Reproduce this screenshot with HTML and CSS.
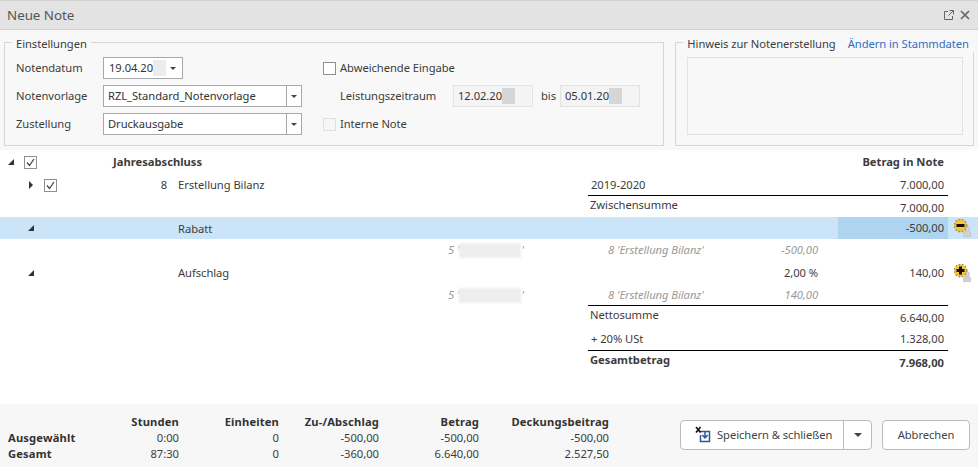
FILE: index.html
```html
<!doctype html>
<html>
<head>
<meta charset="utf-8">
<title>Neue Note</title>
<link rel="stylesheet" href="styles.css">
</head>

<body>
<svg class="defs" width="0" height="0">
	<defs>
		<symbol id="open" viewBox="0 0 6 6"><path d="M6 0V6H0Z"/></symbol>
		<symbol id="closed" viewBox="0 0 6 8"><path d="M1 0L5 4L1 8Z"/></symbol>
		<symbol id="gear" viewBox="0 0 18 18">
			<path d="M9.500 17.500v-2.500c0-2 1.500-3 3.500-3s3.500 1 3.500 3v2.500z" fill="#d2d2d2" stroke="#bdbdbd" stroke-width=".7"/>
			<circle cx="13" cy="10" r="2.500" fill="#d8d8d8" stroke="#bdbdbd" stroke-width=".7"/>
			<circle cx="6.500" cy="6.500" r="6.200" fill="none" stroke="#a58a3a" stroke-width="1.400" stroke-dasharray="1.800 1.500"/>
			<circle cx="6.500" cy="6.500" r="5.500" fill="#f8c82c" stroke="#d9a520" stroke-width=".6"/>
		</symbol>
	</defs>
</svg>

<div class="title">
	<span class="title-text">Neue Note</span>
	<svg class="win-ico" width="10" height="10" viewBox="0 0 10 10"><path d="M4 1.500H.5V9.500H8.500V6M5.500 .5H9.500V4.500M9.500 .5L4.500 5.500" fill="none" stroke="#666" stroke-width="1"/></svg>
	<svg class="win-ico" width="10" height="10" viewBox="0 0 10 10"><path d="M1 1L9 9M9 1L1 9" fill="none" stroke="#666" stroke-width="1.700"/></svg>
</div>

<div class="top">
	<fieldset class="box settings">
		<legend>Einstellungen</legend>
		<div class="form">
			<label>Notendatum</label>
			<div class="date-cell">
				<div class="combo date">19.04.20<span class="blur"></span><i class="caret"></i></div>
			</div>
			<div class="check-line"><span class="check"></span>Abweichende Eingabe</div>

			<label>Notenvorlage</label>
			<div class="combo">RZL_Standard_Notenvorlage<b class="drop"><i class="caret"></i></b></div>
			<div class="period">
				<span class="period-label">Leistungszeitraum</span>
				<span class="ro">12.02.20<span class="blur dark"></span></span>
				<span class="bis">bis</span>
				<span class="ro">05.01.20<span class="blur dark"></span></span>
			</div>

			<label>Zustellung</label>
			<div class="combo">Druckausgabe<b class="drop"><i class="caret"></i></b></div>
			<div class="check-line"><span class="check off"></span>Interne Note</div>
		</div>
	</fieldset>

	<fieldset class="box hint">
		<legend><span>Hinweis zur Notenerstellung</span><a href="#">Ändern in Stammdaten</a></legend>
		<div class="hint-text"></div>
	</fieldset>
</div>

<div class="tree">
	<div class="row head">
		<div class="tc lv0"><svg class="arrow"><use href="#open"/></svg><span class="check on"><svg width="11" height="11" viewBox="0 0 11 11"><path d="M2 5.500L4.500 8.500L9 2" fill="none" stroke="#444" stroke-width="1.300"/></svg></span></div>
		<div class="wide b">Jahresabschluss</div>
		<div class="amt b">Betrag in Note</div>
	</div>
	<div class="row h22">
		<div class="tc lv1"><svg class="arrow small"><use href="#closed"/></svg><span class="check on"><svg width="11" height="11" viewBox="0 0 11 11"><path d="M2 5.500L4.500 8.500L9 2" fill="none" stroke="#444" stroke-width="1.300"/></svg></span></div>
		<div class="num">8</div>
		<div></div>
		<div class="name">Erstellung Bilanz</div>
		<div></div>
		<div class="desc">2019-2020</div>
		<div class="amt">7.000,00</div>
	</div>
	<div class="rule"></div>
	<div class="row h21">
		<div class="lead"></div>
		<div class="desc lift">Zwischensumme</div>
		<div class="amt drop2">7.000,00</div>
	</div>
	<div class="row h22 sel">
		<div class="tc lv1"><svg class="arrow"><use href="#open"/></svg></div>
		<div></div>
		<div></div>
		<div class="name">Rabatt</div>
		<div></div>
		<div class="desc"></div>
		<div class="amt cur">-500,00</div>
		<svg class="act" width="18" height="18"><use href="#gear"/><path d="M2.500 5H10.500V8H2.500Z" fill="#111"/></svg>
	</div>
	<div class="row h22 sub">
		<div class="lead2"></div>
		<div class="ref">5 '<span class="blur wide-blur"></span>'</div>
		<div class="desc split"><span>8 'Erstellung Bilanz'</span><span>-500,00</span></div>
	</div>
	<div class="row h23">
		<div class="tc lv1"><svg class="arrow"><use href="#open"/></svg></div>
		<div></div>
		<div></div>
		<div class="name">Aufschlag</div>
		<div></div>
		<div class="desc pct">2,00 %</div>
		<div class="amt">140,00</div>
		<svg class="act" width="18" height="18"><use href="#gear"/><path d="M2.500 5H5V2.500H8V5H10.500V8H8V10.500H5V8H2.500Z" fill="#111"/></svg>
	</div>
	<div class="row h22 sub">
		<div class="lead2"></div>
		<div class="ref">5 '<span class="blur wide-blur"></span>'</div>
		<div class="desc split"><span>8 'Erstellung Bilanz'</span><span>140,00</span></div>
	</div>
	<div class="rule"></div>
	<div class="row h21">
		<div class="lead"></div>
		<div class="desc lift">Nettosumme</div>
		<div class="amt drop2">6.640,00</div>
	</div>
	<div class="row h24">
		<div class="lead"></div>
		<div class="desc">+ 20% USt</div>
		<div class="amt">1.328,00</div>
	</div>
	<div class="rule"></div>
	<div class="row h21">
		<div class="lead"></div>
		<div class="desc lift b">Gesamtbetrag</div>
		<div class="amt drop2 b">7.968,00</div>
	</div>
</div>

<div class="foot">
	<div class="stats">
		<span></span><b>Stunden</b><b>Einheiten</b><b>Zu-/Abschlag</b><b>Betrag</b><b>Deckungsbeitrag</b>
		<b>Ausgewählt</b><span>0:00</span><span>0</span><span>-500,00</span><span>-500,00</span><span>-500,00</span>
		<b>Gesamt</b><span>87:30</span><span>0</span><span>-360,00</span><span>6.640,00</span><span>2.527,50</span>
	</div>
	<div class="btns">
		<div class="btn save">
			<span class="save-main">
				<svg width="18" height="18" viewBox="0 0 18 18">
					<path d="M5 5.500H14.500V15.500H5.500V9M10 5V11.500M7.300 9L10 12L12.700 9" fill="none" stroke="#2a5a9c" stroke-width="1.500"/>
					<path d="M1 1L5.500 6.500M5.500 1L1 6.500" fill="none" stroke="#111" stroke-width="1.600"/>
				</svg>
				Speichern &amp; schließen
			</span>
			<span class="save-drop"><i class="caret big"></i></span>
		</div>
		<div class="btn cancel">Abbrechen</div>
	</div>
</div>
</body>
</html>
```

FILE: styles.css
```css
*{margin:0; padding:0; box-sizing:border-box;}
html,body{height:467px; overflow:hidden;}
body{background:#fff; font:11.2px/16px "Noto Sans","Open Sans",sans-serif; color:#3c3c3c; letter-spacing:-.05px;}
.defs{position:absolute;}
.b{font-weight:700; letter-spacing:0;}

.title{height:30px; background:#e3e3e3; border-top:1px solid #d2d2d2; border-bottom:1px solid #d0d0d0; display:flex; align-items:center; gap:6px; padding:0 8px 0 7px;}
.title-text{font-size:13.4px; color:#555; flex:1;}
.win-ico{display:block;}

.top{height:120px; background:#f8f8f8; display:flex; gap:11px; padding:2px 4px 0 4px;}
.box{border:1px solid #d6d6d6; height:114px; min-width:0;}
.box legend{margin-left:7px; padding:4px 4px 0; line-height:16px;}
.settings{width:661px;}
.hint{width:299px;}
.hint legend{display:flex; gap:12px; width:294px; white-space:nowrap;}
.hint a{color:#2f6fbd; text-decoration:none;}
.hint-text{margin:5px 10px 0 11px; height:78px; border:1px solid #e3e3e3;}

.form{display:grid; grid-template-columns:87px 199px 1fr; grid-auto-rows:22px; row-gap:6px; align-items:center; padding:0 0 0 11px; margin-top:5px;}
.form label{display:block;}
.date-cell{display:flex;}
.combo{height:22px; background:#fff; border:1px solid #a9a9a9; display:flex; align-items:center; padding-left:4px; position:relative; color:#333;}
.combo.date{width:80px; padding-left:5px;}
.combo.date .caret{margin-left:4px;}
.drop{margin-left:auto; width:15px; height:20px; border-left:1px solid #a9a9a9; display:flex; align-items:center; justify-content:center;}
.caret{display:block; width:0; height:0; border:3px solid transparent; border-top:3px solid #444; border-bottom:0;}
.caret.big{border-width:4px 4px 0;}
.blur{display:inline-block; width:13px; height:16px; background:#ececec;}
.blur.dark{background:#d6d6d6;}
.blur.wide-blur{width:62px; height:15px; background:#eee; vertical-align:middle; filter:blur(1px);}

.check-line{display:flex; align-items:center; gap:4px; margin-left:21px;}
.check{display:flex; align-items:center; justify-content:center; width:13px; height:13px; border:1px solid #8f8f8f; background:#fff;}
.check.off{border-color:#e0e0e0; background:#f6f6f6;}
.check.on{background:#fff;}
.period{display:flex; align-items:center; margin-left:38px;}
.period-label{width:113px;}
.ro{width:80px; height:22px; background:#f4f4f4; border:1px solid #e3e3e3; display:flex; align-items:center; padding-left:4px; color:#333;}
.bis{width:27px; padding-left:8px;}

.tree{height:254px; background:#fff;}
.row{display:grid; grid-template-columns:113px 54px 11px 270px 140px 250px 110px 30px; align-items:center;}
.sel > div{padding-top:2px;}
.head{height:24px;}
.h21{height:21px;}
.h22{height:22px;}
.h23{height:23px;}
.h24{height:24px;}
.sel{background:#cce4f7;}
.tc{display:flex; align-items:center;}
.sel > .tc{padding-top:0;}
.lv0{padding-left:8px;}
.lv1{padding-left:28px;}
.arrow{width:6px; height:6px; fill:#333; margin-right:10px;}
.arrow.small{height:8px;}
.wide{grid-column:2 / span 5;}
.num{text-align:right;}
.desc{padding-left:3px; grid-column:6;}
.amt{grid-column:7; text-align:right; padding-right:4px;}
.sel > .cur{background:#aed4ef; align-self:stretch; line-height:22px; padding-top:0;}
.act{grid-column:8; margin-left:6px; display:block;}
.row > .lift{margin-top:-4px; padding-left:2px;}
.row > .drop2{margin-top:3px;}
.lead{grid-column:1 / span 5;}
.lead2{grid-column:1 / span 4;}
.rule{height:1px; background:#000; width:360px; margin:-1px 0 0 588px;}

.sub{color:#999; font-style:italic;}
.ref{grid-column:5; white-space:nowrap;}
.row > .split{display:flex; justify-content:space-between; padding:0 20px;}
.pct{text-align:right; padding-right:20px;}

.foot{height:63px; background:#f7f7f7; display:flex; justify-content:space-between; padding:10px 8px 0;}
.stats{display:grid; grid-template-columns:71px 100px 100px 100px 100px 130px; grid-auto-rows:16px; text-align:right; letter-spacing:0;}
.stats > :nth-child(6n+1){text-align:left;}
.stats b{font-weight:700; color:#333; letter-spacing:.15px;}
.btns{display:flex; gap:10px; margin-top:6px;}
.btn{height:30px; background:#fff; border:1px solid #bbb; border-radius:4px; display:flex; align-items:center; color:#444;}
.save{width:192px;}
.save-main{width:163px; display:flex; align-items:center; gap:4px; padding-left:14px; height:28px; border-right:1px solid #bbb;}
.save-drop{flex:1; display:flex; justify-content:center;}
.cancel{width:88px; justify-content:center;}
```
